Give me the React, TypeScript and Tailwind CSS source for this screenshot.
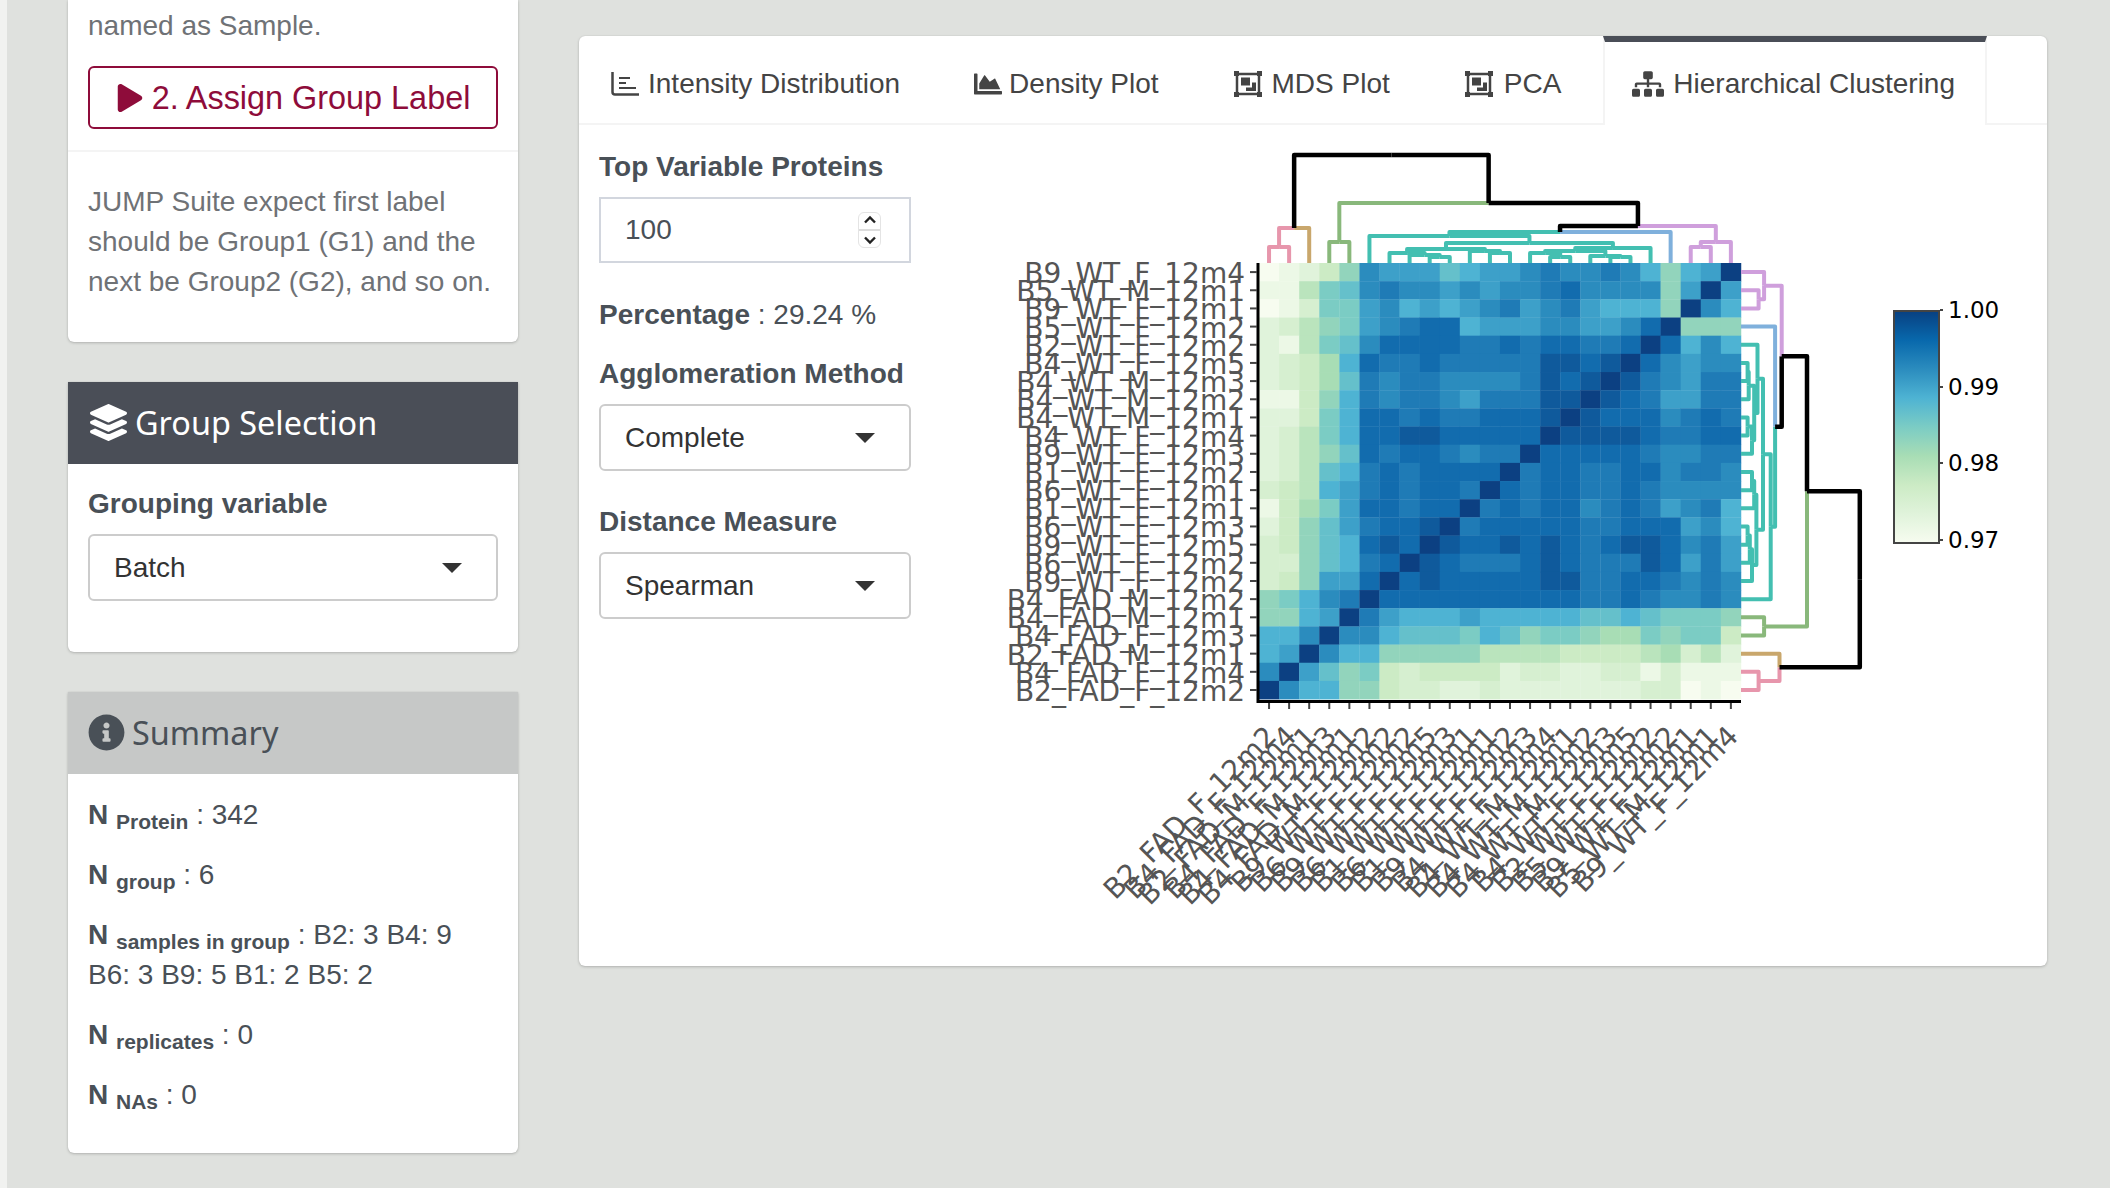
import React from "react";
import { FaChartArea, FaInfoCircle, FaLayerGroup, FaPlay, FaSitemap } from "react-icons/fa";

const rowLabels = [
  "B9_WT_F_12m4", "B5_WT_M_12m1", "B9_WT_F_12m1", "B5_WT_F_12m2", "B2_WT_F_12m2", "B4_WT_F_12m5",
  "B4_WT_M_12m3", "B4_WT_M_12m2", "B4_WT_M_12m1", "B4_WT_F_12m4", "B9_WT_F_12m3", "B1_WT_F_12m2",
  "B6_WT_F_12m1", "B1_WT_F_12m1", "B6_WT_F_12m3", "B9_WT_F_12m5", "B6_WT_F_12m2", "B9_WT_F_12m2",
  "B4_FAD_M_12m2", "B4_FAD_M_12m1", "B4_FAD_F_12m3", "B2_FAD_M_12m1", "B4_FAD_F_12m4", "B2_FAD_F_12m2",
];

// colour level per cell, top row first
const levels = [
  "01247 cbbb9 abbcd ccdca 7abg",
  "11589 cdccb cbccd ecccc 7bgb",
  "01388 bcaba bcdbc dbaaa 7gca",
  "23578 bcdee abbbc cbbce g777",
  "21589 ceeee ddede eddeg eaca",
  "2346a edded ddddf fefge cbcc",
  "23469 dcddc cccdf efgfd cbdd",
  "1147a dcddc bdddf fgfed bbdd",
  "2248a eeded deeef gfeee cded",
  "2358a eeffe eeeeg ffffe ddee",
  "23579 edeed cddge eeeed ccdd",
  "2359a dedee eegde eddee cddc",
  "345ab dedee dgede edded cccc",
  "1468b eedee gdede ecded bcda",
  "2479b deefg deeee eddee ebca",
  "3479a efegf eefef edeff ecdb",
  "3379a degfe dddef edddf ebdb",
  "347bb egefe eeeef fddee dcdc",
  "78acd geeee eeeee edded ccdc",
  "77abg dbaaa baaaa a99a9 8887",
  "aacgc ca999 8a978 87668 7884",
  "abgca a7777 75555 44445 6352",
  "cgb97 84344 44233 22331 3111",
  "gcaa7 74332 23222 22223 3010",
];

const palette: Record<string, string> = {
  "0": "#f7fcf0", "1": "#ecf8e6", "2": "#e0f3db", "3": "#d6efd0", "4": "#ccebc5", "5": "#bae4bd",
  "6": "#a8ddb5", "7": "#92d4bc", "8": "#7bccc4", "9": "#65c0cb", a: "#4eb3d3", b: "#3da0c9",
  c: "#2b8cbe", d: "#1f7bb6", e: "#126cae", f: "#0f5a9c", g: "#0c4082",
};

const PINK = "#e796ac";
const TAN = "#c9a76c";
const GREEN = "#89b87b";
const TEAL = "#43bfb1";
const BLUE = "#7fb0dc";
const PURPLE = "#cf9fdc";
const BLACK = "#000000";

type Tree = { h: number; color: string; at: number; kids: Tree[] };

const leaf = (i: number, color: string): Tree => ({ h: 0, color, at: i, kids: [] });
const join = (h: number, color: string, a: Tree, b: Tree): Tree => ({ h, color, at: (a.at + b.at) / 2, kids: [a, b] });
const t = (i: number) => leaf(i, TEAL);

const cluster0 = join(35, BLACK, join(16, PINK, leaf(0, PINK), leaf(1, PINK)), leaf(2, TAN));
const greenNode = join(21, GREEN, leaf(3, GREEN), leaf(4, GREEN));
const t3 = join(
  14,
  TEAL,
  join(10, TEAL, t(6), join(8, TEAL, t(7), join(6, TEAL, t(8), t(9)))),
  join(12, TEAL, t(10), join(10, TEAL, t(11), t(12))),
);
const t4 = join(
  15,
  TEAL,
  join(
    12,
    TEAL,
    join(10, TEAL, t(13), join(6, TEAL, t(14), t(15))),
    join(7, TEAL, t(16), join(6, TEAL, t(17), t(18))),
  ),
  t(19),
);
const t1 = join(27, TEAL, t(5), join(20, TEAL, t3, t4));
const purple = join(21, PURPLE, join(16, PURPLE, leaf(21, PURPLE), leaf(22, PURPLE)), leaf(23, PURPLE));
const dendro = join(
  108,
  BLACK,
  cluster0,
  join(60, BLACK, greenNode, join(37, BLACK, join(31, BLACK, t1, leaf(20, BLUE)), purple)),
);

const colX = (i: number) => 1259 + 20.08 * (i + 0.5);
const rowY = (i: number) => 263 + 18.17 * (i + 0.5);

function branches(node: Tree, out: { d: string; color: string }[], horizontal: boolean) {
  node.kids.forEach((kid) => {
    branches(kid, out, horizontal);
    if (horizontal) {
      const y = 263 - node.h;
      out.push({ d: `M${colX(node.at)} ${y}H${colX(kid.at)}V${263 - kid.h}`, color: kid.color });
    } else {
      const x = 1741 + node.h * 1.1;
      const pos = (v: number) => rowY(23 - v);
      out.push({ d: `M${x} ${pos(node.at)}V${pos(kid.at)}H${1741 + kid.h * 1.1}`, color: kid.color });
    }
  });
  return out;
}

const Dendrogram: React.FC<{ horizontal: boolean }> = ({ horizontal }) => (
  <g fill="none" strokeLinejoin="round">
    {branches(dendro, [], horizontal).map((b, i) => (
      <path key={i} d={b.d} stroke={b.color} strokeWidth={b.color === BLACK ? 4.5 : 4} />
    ))}
  </g>
);

const Heatmap: React.FC = () => (
  <svg viewBox="1000 140 1000 800" className="h-[800px] w-[1000px] shrink-0">
    <defs>
      <linearGradient id="gnbu" x1="0" y1="1" x2="0" y2="0">
        <stop offset="0" stopColor="#f7fcf0" />
        <stop offset="0.125" stopColor="#e0f3db" />
        <stop offset="0.25" stopColor="#ccebc5" />
        <stop offset="0.375" stopColor="#a8ddb5" />
        <stop offset="0.5" stopColor="#7bccc4" />
        <stop offset="0.625" stopColor="#4eb3d3" />
        <stop offset="0.75" stopColor="#2b8cbe" />
        <stop offset="0.875" stopColor="#0868ac" />
        <stop offset="1" stopColor="#084081" />
      </linearGradient>
    </defs>

    {levels.map((row, r) =>
      row
        .split(" ")
        .join("")
        .split("")
        .map((level, c) => (
          <rect
            key={`${r}-${c}`}
            x={1259 + 20.08 * c}
            y={263 + 18.17 * r}
            width={20.4}
            height={18.5}
            fill={palette[level]}
          />
        )),
    )}

    <Dendrogram horizontal />
    <Dendrogram horizontal={false} />

    {/* axes */}
    <path d="M1258 263V701.5H1741" fill="none" stroke="#000" strokeWidth="3" />
    {rowLabels.map((label, i) => (
      <g key={label}>
        <line x1="1250" x2="1257" y1={rowY(i)} y2={rowY(i)} stroke="#444" strokeWidth="2" />
        <text
          x="1245"
          y={rowY(i) + 11}
          textAnchor="end"
          className="fill-[#555555] font-['DejaVu_Sans',sans-serif] text-[28px]"
        >
          {label}
        </text>
        <line x1={colX(23 - i)} x2={colX(23 - i)} y1="703" y2="709" stroke="#444" strokeWidth="2" />
        <text
          transform={`translate(${colX(23 - i) + 9} 738) rotate(-45)`}
          textAnchor="end"
          className="fill-[#555555] font-['DejaVu_Sans',sans-serif] text-[28px]"
        >
          {label}
        </text>
      </g>
    ))}

    {/* colour bar */}
    <rect x="1894" y="311" width="45" height="232" fill="url(#gnbu)" stroke="#444" strokeWidth="2" />
    {[
      ["1.00", 310],
      ["0.99", 387],
      ["0.98", 463],
      ["0.97", 540],
    ].map(([label, y]) => (
      <g key={label}>
        <line x1="1940" x2="1943" y1={y} y2={y} stroke="#444" strokeWidth="2" />
        <text
          x="1948"
          y={Number(y) + 8}
          className="fill-black font-['DejaVu_Sans',sans-serif] text-[23px]"
        >
          {label}
        </text>
      </g>
    ))}
  </svg>
);

const SelectBox: React.FC<{ value: string; className: string }> = ({ value, className }) => (
  <div className={`flex h-[67px] items-center justify-between rounded-[6px] border-2 border-[#cccccc] bg-white pl-[24px] pr-[34px] text-[#333333] ${className}`}>
    <span>{value}</span>
    <span className="h-0 w-0 border-x-[10px] border-t-[10px] border-x-transparent border-t-[#333333]" />
  </div>
);

const Stat: React.FC<{ name: string; children: React.ReactNode }> = ({ name, children }) => (
  <p className="mb-[20px]">
    <strong>
      N <sub>{name}</sub>
    </strong>{" "}
    : {children}
  </p>
);

const AxisBarsIcon: React.FC = () => (
  <svg viewBox="0 0 28 24" className="h-[24px] w-[28px]" fill="none" stroke="currentColor" strokeWidth="2.5">
    <path d="M1.5 0V20A2.5 2.5 0 0 0 4 22.5H28" />
    <path d="M8 6H19M8 11H15M8 16H25" strokeWidth="2.2" />
  </svg>
);

const FramedSquaresIcon: React.FC = () => (
  <svg viewBox="0 0 28 26" className="h-[26px] w-[28px]" fill="currentColor">
    <path d="M3 3H25V23H3Z" fill="none" stroke="currentColor" strokeWidth="2.5" />
    <path d="M0 0H5V5H0ZM23 0H28V5H23ZM0 21H5V26H0ZM23 21H28V26H23Z" />
    <path d="M7 6.5H16V14.5H7ZM18 11.5H22V20H12V16.5H18Z" />
  </svg>
);

const tabs = [
  { label: "Intensity Distribution", icon: <AxisBarsIcon />, cls: "gap-[9px] pl-[32px] pr-[31px]" },
  { label: "Density Plot", icon: <FaChartArea size={28} />, cls: "gap-[7px] px-[32px]" },
  { label: "MDS Plot", icon: <FramedSquaresIcon />, cls: "gap-[10px] px-[32px]" },
  { label: "PCA", icon: <FramedSquaresIcon />, cls: "gap-[11px] px-[32px]" },
];

export default function App() {
  return (
    <div className="flex h-[1188px] w-[2110px] overflow-hidden bg-[#dfe1de] font-['Liberation_Sans',sans-serif] text-[28px] leading-[40px] text-[#495057]">
      <div className="w-[7px] shrink-0 bg-[#f1f2f0]" />

      {/* Sidebar */}
      <div className="ml-[61px] w-[450px] shrink-0">
        <div className="rounded-b-[6px] bg-white shadow-[0_0_1px_rgba(0,0,0,0.125),0_1px_3px_rgba(0,0,0,0.2)]">
          <div className="border-b-2 border-[#f4f4f4] px-[20px] pb-[21px] pt-[6px]">
            <p className="text-[#6f7276]">named as Sample.</p>
            <button className="mt-[20px] flex h-[63px] w-full items-center justify-center gap-[8px] rounded-[6px] border-2 border-[#8e0c3a] text-[32.4px] text-[#8e0c3a]">
              <FaPlay size={28} />
              2. Assign Group Label
            </button>
          </div>
          <div className="px-[20px] pb-[40px] pt-[30px] text-[#6f7276]">
            JUMP Suite expect first label should be Group1 (G1) and the next be Group2 (G2), and so on.
          </div>
        </div>

        <div className="mt-[40px] rounded-b-[6px] bg-white pb-[51px] shadow-[0_0_1px_rgba(0,0,0,0.125),0_1px_3px_rgba(0,0,0,0.2)]">
          <div className="flex h-[82px] items-center gap-[8px] bg-[#4a4e57] pb-[2px] pl-[22px] font-['Noto_Sans',sans-serif] text-[32.4px] text-white">
            <FaLayerGroup size={37} />
            Group Selection
          </div>
          <div className="px-[20px] pt-[20px]">
            <div className="font-bold">Grouping variable</div>
            <SelectBox value="Batch" className="mt-[10px]" />
          </div>
        </div>

        <div className="mt-[40px] rounded-b-[6px] bg-white shadow-[0_0_1px_rgba(0,0,0,0.125),0_1px_3px_rgba(0,0,0,0.2)]">
          <div className="flex h-[82px] items-center gap-[7px] bg-[#c6c8c7] pb-[2px] pl-[20px] font-['Noto_Sans',sans-serif] text-[32.4px]">
            <FaInfoCircle size={37} />
            Summary
          </div>
          <div className="px-[20px] pb-[18px] pt-[21px]">
            <Stat name="Protein">342</Stat>
            <Stat name="group">6</Stat>
            <Stat name="samples in group">B2: 3 B4: 9 B6: 3 B9: 5 B1: 2 B5: 2</Stat>
            <Stat name="replicates">0</Stat>
            <Stat name="NAs">0</Stat>
          </div>
        </div>
      </div>

      {/* Main panel */}
      <div className="ml-[61px] mt-[36px] h-[930px] w-[1468px] shrink-0 rounded-[6px] bg-white shadow-[0_0_1px_rgba(0,0,0,0.125),0_1px_3px_rgba(0,0,0,0.2)]">
        <div className="flex h-[89px] gap-[11px] border-b-2 border-[#f4f4f4] text-[#444444]">
          {tabs.map((tab) => (
            <div key={tab.label} className={`flex items-center pt-[8px] ${tab.cls}`}>
              {tab.icon}
              {tab.label}
            </div>
          ))}
          <div className="-mb-[2px] -ml-[1px] flex h-[89px] items-center gap-[9px] border-x-2 border-t-[6px] border-x-[#f4f4f4] border-t-[#4a4e57] bg-white pl-[27px] pr-[30px]">
            <FaSitemap size={32} />
            Hierarchical Clustering
          </div>
        </div>

        <div className="flex pl-[20px] pt-[15px]">
          <div className="w-[312px] shrink-0">
            <div className="mt-[7px] font-bold">Top Variable Proteins</div>
            <div className="mt-[10px] flex h-[66px] items-center justify-between border-2 border-[#d2d6de] pl-[24px] pr-[28px]">
              <span>100</span>
              <div className="flex h-[36px] w-[23px] flex-col items-center justify-around rounded-[6px] border border-[#e4e4e4] text-[#222222]">
                <svg viewBox="0 0 14 9" className="h-[9px] w-[14px]" fill="none" stroke="currentColor" strokeWidth="2.4">
                  <path d="M2 7.5L7 2.5L12 7.5" />
                </svg>
                <div className="h-[2px] w-full bg-[#dddddd]" />
                <svg viewBox="0 0 14 9" className="h-[9px] w-[14px]" fill="none" stroke="currentColor" strokeWidth="2.4">
                  <path d="M2 1.5L7 6.5L12 1.5" />
                </svg>
              </div>
            </div>
            <p className="mt-[32px]">
              <strong>Percentage</strong> : 29.24 %
            </p>
            <div className="mt-[19px] font-bold">Agglomeration Method</div>
            <SelectBox value="Complete" className="mt-[10px]" />
            <div className="mt-[31px] font-bold">Distance Measure</div>
            <SelectBox value="Spearman" className="mt-[10px]" />
          </div>
          <div className="ml-[89px]">
            <Heatmap />
          </div>
        </div>
      </div>
    </div>
  );
}
